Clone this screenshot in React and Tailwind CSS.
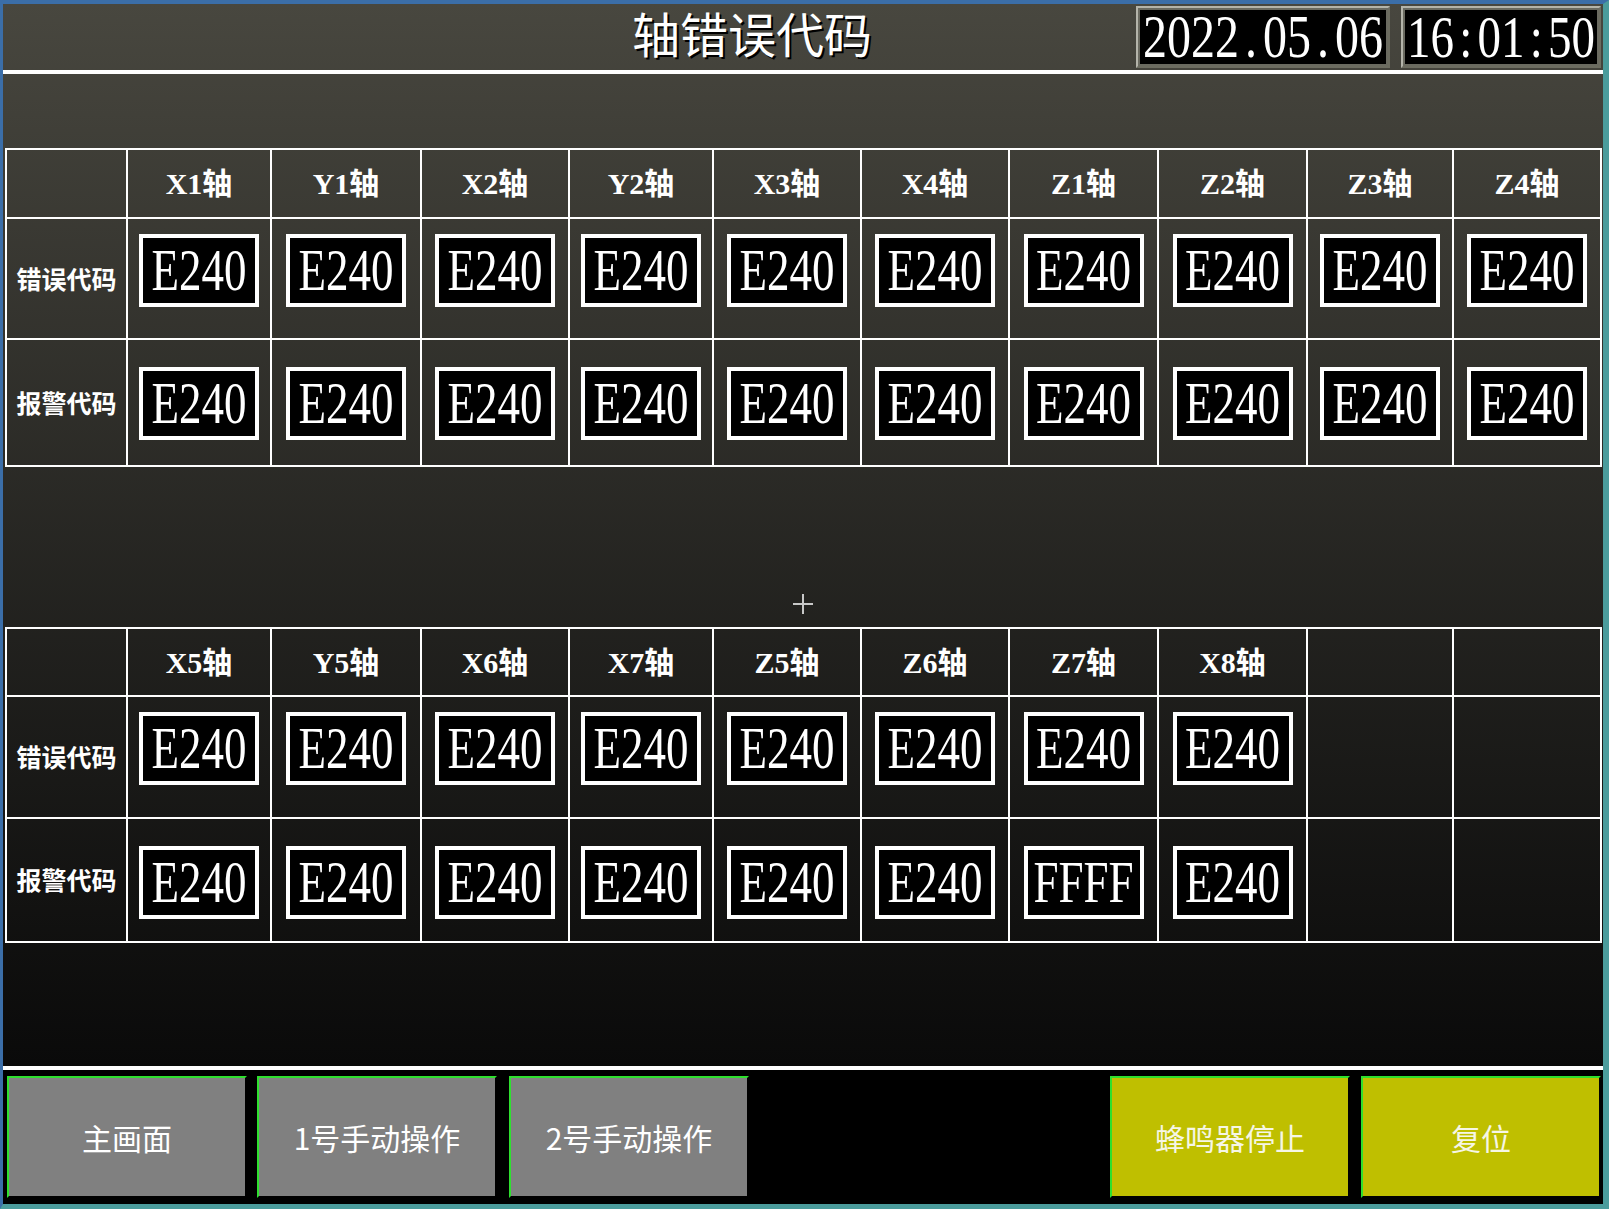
import React from "react";

const topAxes = ["X1轴", "Y1轴", "X2轴", "Y2轴", "X3轴", "X4轴", "Z1轴", "Z2轴", "Z3轴", "Z4轴"];
const topErr = Array(10).fill("E240");
const topAlarm = Array(10).fill("E240");

const bottomAxes = ["X5轴", "Y5轴", "X6轴", "X7轴", "Z5轴", "Z6轴", "Z7轴", "X8轴", "", ""];
const bottomErr = ["E240", "E240", "E240", "E240", "E240", "E240", "E240", "E240", "", ""];
const bottomAlarm = ["E240", "E240", "E240", "E240", "E240", "E240", "FFFF", "E240", "", ""];

// fixed-pitch serif digits, stretched tall like the panel's font
const Mono = ({ text, size = "text-[47px]" }) => (
  <div className={`flex shrink-0 scale-y-[1.26] font-['Liberation_Serif',serif] ${size} leading-none text-white`}>
    {text.split("").map((c, i) => (
      <span key={i} className="w-[0.5em] text-center">
        {c}
      </span>
    ))}
  </div>
);

const Code = ({ value }) => (
  <div className="w-[120px] h-[73px] border-4 border-white bg-black flex items-center justify-center">
    <div className="scale-y-[1.32] font-['Liberation_Serif',serif] text-[45px] leading-none text-white">{value}</div>
  </div>
);

const cell = "border-l-2 border-t-2 border-white";

const Table = ({ axes, err, alarm, rows }) => (
  <div
    className={`ml-[2px] w-fit grid grid-cols-[121px_144px_150px_148px_144px_148px_148px_149px_149px_146px_148px] ${rows} border-r-2 border-b-2 border-white`}
  >
    <div className={cell} />
    {axes.map((a, i) => (
      <div
        key={"h" + i}
        className={`${cell} flex items-center justify-center text-[30px] font-bold text-white font-['Liberation_Serif','Noto_Sans_CJK_SC',serif]`}
      >
        {a}
      </div>
    ))}
    <div className={`${cell} flex items-center justify-center text-[25px] font-bold text-white font-['Noto_Sans_CJK_SC',sans-serif]`}>
      错误代码
    </div>
    {err.map((v, i) => (
      <div key={"e" + i} className={`${cell} flex justify-center pt-[15px]`}>
        {v && <Code value={v} />}
      </div>
    ))}
    <div className={`${cell} flex items-center justify-center text-[25px] font-bold text-white font-['Noto_Sans_CJK_SC',sans-serif]`}>
      报警代码
    </div>
    {alarm.map((v, i) => (
      <div key={"a" + i} className={`${cell} flex justify-center pt-[27px]`}>
        {v && <Code value={v} />}
      </div>
    ))}
  </div>
);

const Btn = ({ label, yellow, className = "" }) => (
  <div
    className={`w-[240px] h-[122px] border-2 border-t-[#2ee02e] border-l-[#2ee02e] border-r-black border-b-black flex items-center justify-center text-[30px] font-['Noto_Sans_CJK_SC',sans-serif] ${
      yellow ? "bg-[#bfbf00] text-[#f6f6e6]" : "bg-[#808080] text-white"
    } ${className}`}
  >
    {label}
  </div>
);

const App = () => {
  return (
    <div className="w-[1609px] h-[1209px] bg-black border-t-4 border-l-[3px] border-r-[6px] border-b-[5px] border-t-[#3b6ea8] border-l-[#3b6ea8] border-r-[#4b9c9c] border-b-[#4b9c9c] flex flex-col">
      <div className="relative h-[1062px] bg-gradient-to-b from-[#48473f] to-[#0a0a0a] flex flex-col">
        {/* header */}
        <div className="h-[66px] flex items-start pr-[2px]">
          <div className="ml-[629px] mt-[4px] text-[48px] leading-none text-white font-['Noto_Sans_CJK_SC',sans-serif] [text-shadow:2px_2px_0_#000]">
            轴错误代码
          </div>
          <div className="ml-auto mt-[2px] w-[254px] h-[62px] border-2 border-t-[#b4b4aa] border-l-[#b4b4aa] border-r-[#6c6c60] border-b-[#6c6c60]">
            <div className="w-full h-full border-2 border-[#6a6a60] bg-black flex items-center justify-center">
              <Mono text="2022.05.06" size="text-[48px]" />
            </div>
          </div>
          <div className="ml-[11px] mt-[2px] w-[200px] h-[62px] border-2 border-t-[#b4b4aa] border-l-[#b4b4aa] border-r-[#6c6c60] border-b-[#6c6c60]">
            <div className="w-full h-full border-2 border-[#6a6a60] bg-black flex items-center justify-center">
              <Mono text="16:01:50" size="text-[47px]" />
            </div>
          </div>
        </div>
        <div className="h-[4px] bg-white" />

        <div className="mt-[74px]">
          <Table axes={topAxes} err={topErr} alarm={topAlarm} rows="grid-rows-[69px_121px_127px]" />
        </div>
        <div className="mt-[160px]">
          <Table axes={bottomAxes} err={bottomErr} alarm={bottomAlarm} rows="grid-rows-[68px_122px_124px]" />
        </div>

        {/* touch cursor */}
        <div className="absolute left-[790px] top-[599px] w-[20px] h-[2px] bg-[#c8c8c8]" />
        <div className="absolute left-[799px] top-[590px] w-[2px] h-[20px] bg-[#c8c8c8]" />
      </div>
      <div className="h-[4px] bg-white" />
      <div className="flex-1 bg-black flex items-start pt-[6px] pl-[4px] pr-[2px]">
        <Btn label="主画面" />
        <Btn label="1号手动操作" className="ml-[10px]" />
        <Btn label="2号手动操作" className="ml-[12px]" />
        <Btn label="蜂鸣器停止" yellow className="ml-auto" />
        <Btn label="复位" yellow className="ml-[11px]" />
      </div>
    </div>
  );
};

export default App;
